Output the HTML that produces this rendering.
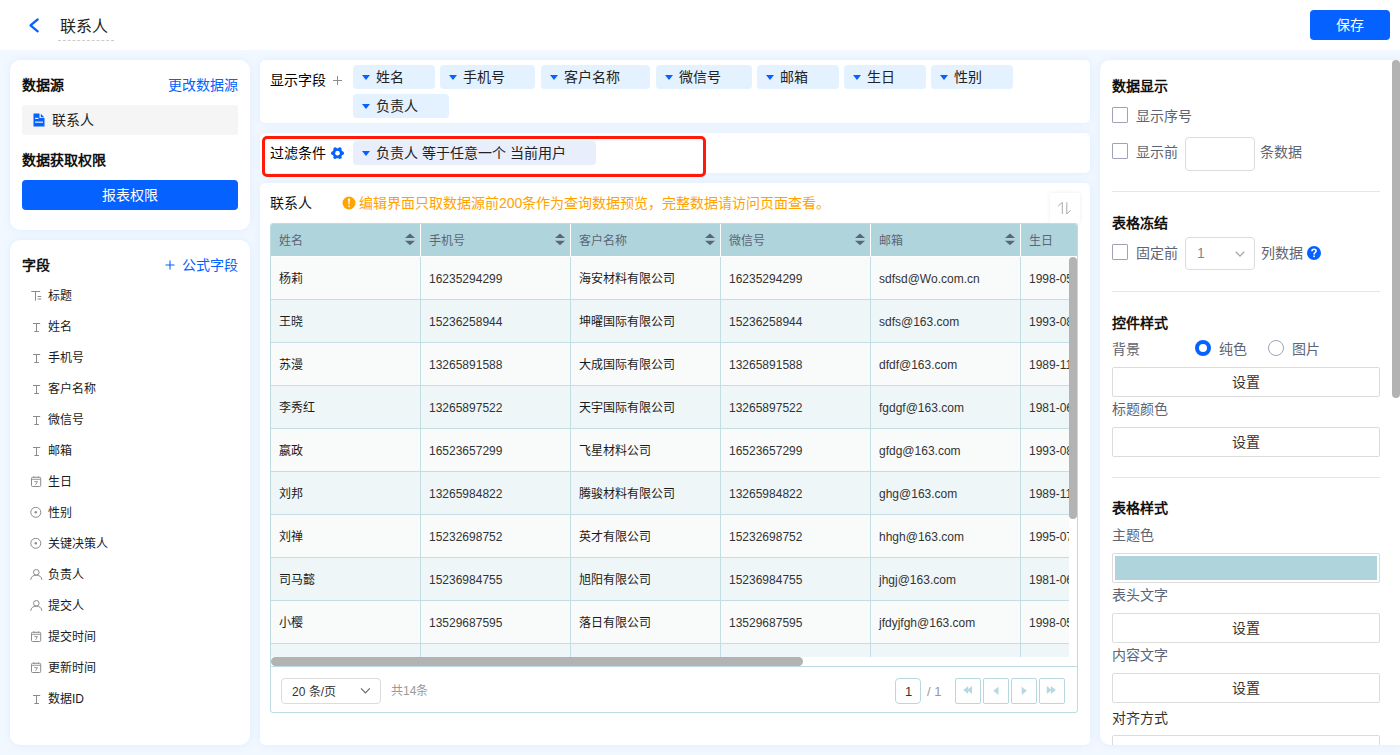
<!DOCTYPE html>
<html lang="zh-CN"><head><meta charset="utf-8">
<style>
*{box-sizing:border-box;margin:0;padding:0}
html,body{width:1400px;height:755px;overflow:hidden}
body{font-family:"Liberation Sans",sans-serif;font-size:14px;color:#222;background:#f2f8ff;position:relative}
.abs{position:absolute}
.t{position:absolute;white-space:nowrap;line-height:1}
.panel{position:absolute;background:#fff;box-shadow:0 0 10px rgba(0,120,255,.09)}
.blue{color:#0561ff}
.b{font-weight:bold;color:#111}
.btn{position:absolute;background:#0561ff;color:#fff;border-radius:4px;text-align:center}
.tag{position:absolute;height:24px;background:#e4f1fe;border-radius:4px}
.tag i{position:absolute;left:9px;top:10px;width:0;height:0;border-left:4px solid transparent;border-right:4px solid transparent;border-top:5px solid #0561ff}
.tag span{position:absolute;left:23px;top:5px;line-height:14px;color:#222}
.fi{position:absolute;left:0;width:240px;height:31px}
.fi span{position:absolute;left:38px;top:0px;font-size:12px;line-height:12px;color:#1a1a1a}
.fi svg{position:absolute;left:20px;top:0px}
.th{position:absolute;top:0;height:33px;width:150px}
.th span{position:absolute;left:8px;top:11px;font-size:12px;line-height:12px;color:#5b6577}
.th svg{position:absolute;right:5px;top:9px}
.row{position:absolute;left:0;width:1200px;height:43px;border-bottom:1px solid #c3dfe4}
.row.o{background:#f9fbfb}
.row.e{background:#eff6f8}
.cell{position:absolute;top:0;height:42px;width:150px;border-right:1px solid #c3dfe4}
.cell span{position:absolute;left:8px;top:16px;font-size:12px;line-height:12px;color:#1a1a1a;white-space:nowrap}
.cell span.l{color:#333}
.pg{position:absolute;top:12px;width:26px;height:26px;border:1px solid #b7d8de;border-radius:3px;background:#fff}
.rp .t{color:#5e6472}
.rp .t.b{color:#111}
.cb{position:absolute;width:16px;height:16px;border:1px solid #a0a3b5;border-radius:1px;background:#fff}
.sbtn{position:absolute;left:12px;width:268px;height:30px;border:1px solid #dcdcdc;border-radius:2px;background:#fff;text-align:center;line-height:28px;font-size:14px;color:#333}
.hr{position:absolute;left:12px;width:268px;height:1px;background:#e6e6e6}
</style></head><body>
<div class="abs" style="left:0;top:0;width:1400px;height:50px;background:#fff">
<svg class="abs" style="left:28px;top:17px" width="12" height="17" viewBox="0 0 12 17"><polyline points="9.7,2.4 2.5,8.35 9.7,14.3" fill="none" stroke="#0561ff" stroke-width="2.3" stroke-linecap="round" stroke-linejoin="round"/></svg>
<div class="t" style="left:60px;top:19px;font-size:16px;color:#222">联系人</div>
<div class="abs" style="left:58px;top:40px;width:56px;border-top:1px dashed #ccc"></div>
<div class="btn" style="left:1310px;top:10px;width:80px;height:30px;line-height:30px;font-size:14px">保存</div>
</div>
<div class="panel" style="left:10px;top:60px;width:240px;height:170px;border-radius:10px">
<div class="t b" style="left:12px;top:18px">数据源</div>
<div class="t blue" style="right:12px;top:18px">更改数据源</div>
<div class="abs" style="left:12px;top:45px;width:216px;height:30px;background:#f5f5f5;border-radius:2px">
<svg class="abs" style="left:11px;top:8px" width="12" height="14" viewBox="0 0 12 14"><path d="M0.5 0.5H6.5V5H11.5V13.5H0.5Z" fill="#0561ff"/><path d="M7.8 0.8L11.2 4.2H7.8Z" fill="#0561ff"/><rect x="2" y="4.8" width="3.5" height="1.1" fill="#fff"/><rect x="2" y="8.6" width="8" height="1.1" fill="#fff"/></svg>
<div class="t" style="left:30px;top:8px">联系人</div>
</div>
<div class="t b" style="left:12px;top:93px">数据获取权限</div>
<div class="btn" style="left:12px;top:120px;width:216px;height:30px;line-height:30px">报表权限</div>
</div>
<div class="panel" style="left:10px;top:240px;width:240px;height:505px;border-radius:10px">
<div class="t b" style="left:12px;top:18px">字段</div>
<div class="t blue" style="right:12px;top:18px">公式字段</div>
<svg class="abs" style="left:155px;top:20px" width="10" height="10" viewBox="0 0 10 10"><path d="M0.5 5H9.5M5 0.5V9.5" stroke="#0561ff" stroke-width="1.1" fill="none"/></svg>
<div class="fi" style="top:50px"><svg width="12" height="12" viewBox="0 0 12 12"><path d="M1.3 1.5H10.2M5.5 1.5V10.6M7.6 6.5H11.2M7.6 9H11.2" stroke="#8a8a8a" stroke-width="1" fill="none"/></svg><span>标题</span></div>
<div class="fi" style="top:81px"><svg width="12" height="12" viewBox="0 0 12 12"><path d="M3 2.5H10.2M6.5 2.5V10.5M4.3 10.5H8.9" stroke="#8a8a8a" stroke-width="1" fill="none"/></svg><span>姓名</span></div>
<div class="fi" style="top:112px"><svg width="12" height="12" viewBox="0 0 12 12"><path d="M3 2.5H10.2M6.5 2.5V10.5M4.3 10.5H8.9" stroke="#8a8a8a" stroke-width="1" fill="none"/></svg><span>手机号</span></div>
<div class="fi" style="top:143px"><svg width="12" height="12" viewBox="0 0 12 12"><path d="M3 2.5H10.2M6.5 2.5V10.5M4.3 10.5H8.9" stroke="#8a8a8a" stroke-width="1" fill="none"/></svg><span>客户名称</span></div>
<div class="fi" style="top:174px"><svg width="12" height="12" viewBox="0 0 12 12"><path d="M3 2.5H10.2M6.5 2.5V10.5M4.3 10.5H8.9" stroke="#8a8a8a" stroke-width="1" fill="none"/></svg><span>微信号</span></div>
<div class="fi" style="top:205px"><svg width="12" height="12" viewBox="0 0 12 12"><path d="M3 2.5H10.2M6.5 2.5V10.5M4.3 10.5H8.9" stroke="#8a8a8a" stroke-width="1" fill="none"/></svg><span>邮箱</span></div>
<div class="fi" style="top:236px"><svg width="12" height="12" viewBox="0 0 12 12"><rect x="1.5" y="1.3" width="9.2" height="9.2" rx="1" stroke="#8a8a8a" stroke-width="1" fill="none"/><path d="M1.5 3.3H10.7M4 0.3V1.8M8.5 0.3V1.8M4.3 5.6H7.4L5.6 8.8" stroke="#8a8a8a" stroke-width="0.9" fill="none"/></svg><span>生日</span></div>
<div class="fi" style="top:267px"><svg width="12" height="12" viewBox="0 0 12 12"><circle cx="5.8" cy="5.3" r="5" stroke="#8a8a8a" stroke-width="1" fill="none"/><circle cx="5.8" cy="5.3" r="1.2" fill="#8a8a8a"/></svg><span>性别</span></div>
<div class="fi" style="top:298px"><svg width="12" height="12" viewBox="0 0 12 12"><circle cx="5.8" cy="5.3" r="5" stroke="#8a8a8a" stroke-width="1" fill="none"/><circle cx="5.8" cy="5.3" r="1.2" fill="#8a8a8a"/></svg><span>关键决策人</span></div>
<div class="fi" style="top:329px"><svg width="13" height="12" viewBox="0 0 13 12"><circle cx="6.3" cy="3.3" r="2.8" stroke="#8a8a8a" stroke-width="1" fill="none"/><path d="M0.8 10.8C0.8 8 3.2 6.1 6.3 6.1S11.8 8 11.8 10.8" stroke="#8a8a8a" stroke-width="1" fill="none"/></svg><span>负责人</span></div>
<div class="fi" style="top:360px"><svg width="13" height="12" viewBox="0 0 13 12"><circle cx="6.3" cy="3.3" r="2.8" stroke="#8a8a8a" stroke-width="1" fill="none"/><path d="M0.8 10.8C0.8 8 3.2 6.1 6.3 6.1S11.8 8 11.8 10.8" stroke="#8a8a8a" stroke-width="1" fill="none"/></svg><span>提交人</span></div>
<div class="fi" style="top:391px"><svg width="12" height="12" viewBox="0 0 12 12"><rect x="1.5" y="1.3" width="9.2" height="9.2" rx="1" stroke="#8a8a8a" stroke-width="1" fill="none"/><path d="M1.5 3.3H10.7M4 0.3V1.8M8.5 0.3V1.8M4.3 5.6H7.4L5.6 8.8" stroke="#8a8a8a" stroke-width="0.9" fill="none"/></svg><span>提交时间</span></div>
<div class="fi" style="top:422px"><svg width="12" height="12" viewBox="0 0 12 12"><rect x="1.5" y="1.3" width="9.2" height="9.2" rx="1" stroke="#8a8a8a" stroke-width="1" fill="none"/><path d="M1.5 3.3H10.7M4 0.3V1.8M8.5 0.3V1.8M4.3 5.6H7.4L5.6 8.8" stroke="#8a8a8a" stroke-width="0.9" fill="none"/></svg><span>更新时间</span></div>
<div class="fi" style="top:453px"><svg width="12" height="12" viewBox="0 0 12 12"><path d="M3 2.5H10.2M6.5 2.5V10.5M4.3 10.5H8.9" stroke="#8a8a8a" stroke-width="1" fill="none"/></svg><span>数据ID</span></div>
</div>
<div class="panel" style="left:260px;top:60px;width:830px;height:63px;border-radius:5px">
<div class="t" style="left:10px;top:13px;color:#000">显示字段</div>
<svg class="abs" style="left:73px;top:16px" width="9" height="9" viewBox="0 0 9 9"><path d="M0 4.5H9M4.5 0V9" stroke="#8c8c8c" stroke-width="1" fill="none"/></svg>
<div class="tag" style="left:93px;top:5px;width:82px"><i></i><span>姓名</span></div>
<div class="tag" style="left:180px;top:5px;width:95px"><i></i><span>手机号</span></div>
<div class="tag" style="left:281px;top:5px;width:109px"><i></i><span>客户名称</span></div>
<div class="tag" style="left:396px;top:5px;width:96px"><i></i><span>微信号</span></div>
<div class="tag" style="left:497px;top:5px;width:82px"><i></i><span>邮箱</span></div>
<div class="tag" style="left:584px;top:5px;width:82px"><i></i><span>生日</span></div>
<div class="tag" style="left:671px;top:5px;width:82px"><i></i><span>性别</span></div>
<div class="tag" style="left:93px;top:34px;width:96px"><i></i><span>负责人</span></div>
</div>
<div class="panel" style="left:260px;top:133px;width:830px;height:40px;border-radius:5px">
<div class="t" style="left:10px;top:13px;color:#000">过滤条件</div>
<svg class="abs" style="left:71px;top:14px" width="14" height="13" viewBox="0 0 14 13"><g fill="#0561ff"><circle cx="6.50" cy="6.15" r="5"/><circle cx="11.20" cy="6.15" r="1.80"/><circle cx="8.85" cy="2.08" r="1.80"/><circle cx="4.15" cy="2.08" r="1.80"/><circle cx="1.80" cy="6.15" r="1.80"/><circle cx="4.15" cy="10.22" r="1.80"/><circle cx="8.85" cy="10.22" r="1.80"/></g><circle cx="6.50" cy="6.15" r="2.3" fill="#fff"/></svg>
<div class="tag" style="left:93px;top:8px;width:243px;background:#e8eefc"><i></i><span>负责人 等于任意一个 当前用户</span></div>
</div>
<div class="abs" style="left:262px;top:136px;width:444px;height:41px;border:3px solid #ff1a0a;border-radius:5px"></div>
<div class="panel" style="left:260px;top:183px;width:830px;height:562px;border-radius:5px">
<div class="t" style="left:10px;top:13px;color:#111">联系人</div>
<svg class="abs" style="left:82px;top:13px" width="14" height="14" viewBox="0 0 14 14"><circle cx="7" cy="7" r="6.5" fill="#ffa400"/><path d="M5.9 2.8H8.1L7.5 8.6H6.5Z" fill="#fff"/><rect x="6.3" y="9.6" width="1.4" height="1.5" fill="#fff"/></svg>
<div class="t" style="left:99px;top:13px;color:#ffa200">编辑界面只取数据源前200条作为查询数据预览，完整数据请访问页面查看。</div>
<div class="abs" style="left:790px;top:10px;width:30px;height:30px;background:#fff;box-shadow:0 0 4px rgba(0,0,0,.08)"><svg class="abs" style="left:7px;top:8px" width="16" height="14" viewBox="0 0 16 14"><path d="M5.3 13V1.3L1.2 5.2M9.8 1.3V13L13.7 9.1" stroke="#aaa" stroke-width="1" fill="none"/></svg></div>
<div class="abs" style="left:10px;top:40px;width:808px;height:490px;border:1px solid #bcdce1;border-radius:3px;overflow:hidden;background:#fff">
<div class="abs" style="left:0;top:0;width:806px;height:32px;background:#b0d4dc;overflow:hidden">
<div class="th" style="left:0px;border-right:1px solid #fff;"><span>姓名</span><svg width="10" height="13" viewBox="0 0 10 13"><path d="M5 0.5L10 5H0Z" fill="#5b6577"/><path d="M0 7.8H10L5 12.3Z" fill="#5b6577"/></svg></div>
<div class="th" style="left:150px;border-right:1px solid #fff;"><span>手机号</span><svg width="10" height="13" viewBox="0 0 10 13"><path d="M5 0.5L10 5H0Z" fill="#5b6577"/><path d="M0 7.8H10L5 12.3Z" fill="#5b6577"/></svg></div>
<div class="th" style="left:300px;border-right:1px solid #fff;"><span>客户名称</span><svg width="10" height="13" viewBox="0 0 10 13"><path d="M5 0.5L10 5H0Z" fill="#5b6577"/><path d="M0 7.8H10L5 12.3Z" fill="#5b6577"/></svg></div>
<div class="th" style="left:450px;border-right:1px solid #fff;"><span>微信号</span><svg width="10" height="13" viewBox="0 0 10 13"><path d="M5 0.5L10 5H0Z" fill="#5b6577"/><path d="M0 7.8H10L5 12.3Z" fill="#5b6577"/></svg></div>
<div class="th" style="left:600px;border-right:1px solid #fff;"><span>邮箱</span><svg width="10" height="13" viewBox="0 0 10 13"><path d="M5 0.5L10 5H0Z" fill="#5b6577"/><path d="M0 7.8H10L5 12.3Z" fill="#5b6577"/></svg></div>
<div class="th" style="left:750px;"><span>生日</span></div>
</div>
<div class="abs" style="left:0;top:33px;width:798px;height:400px;overflow:hidden">
<div class="row o" style="top:0px"><div class="cell" style="left:0px"><span>杨莉</span></div><div class="cell" style="left:150px"><span class="l">16235294299</span></div><div class="cell" style="left:300px"><span>海安材料有限公司</span></div><div class="cell" style="left:450px"><span class="l">16235294299</span></div><div class="cell" style="left:600px"><span class="l">sdfsd@Wo.com.cn</span></div><div class="cell" style="left:750px"><span class="l">1998-05-01</span></div></div>
<div class="row e" style="top:43px"><div class="cell" style="left:0px"><span>王晓</span></div><div class="cell" style="left:150px"><span class="l">15236258944</span></div><div class="cell" style="left:300px"><span>坤曜国际有限公司</span></div><div class="cell" style="left:450px"><span class="l">15236258944</span></div><div class="cell" style="left:600px"><span class="l">sdfs@163.com</span></div><div class="cell" style="left:750px"><span class="l">1993-08-01</span></div></div>
<div class="row o" style="top:86px"><div class="cell" style="left:0px"><span>苏漫</span></div><div class="cell" style="left:150px"><span class="l">13265891588</span></div><div class="cell" style="left:300px"><span>大成国际有限公司</span></div><div class="cell" style="left:450px"><span class="l">13265891588</span></div><div class="cell" style="left:600px"><span class="l">dfdf@163.com</span></div><div class="cell" style="left:750px"><span class="l">1989-11-01</span></div></div>
<div class="row e" style="top:129px"><div class="cell" style="left:0px"><span>李秀红</span></div><div class="cell" style="left:150px"><span class="l">13265897522</span></div><div class="cell" style="left:300px"><span>天宇国际有限公司</span></div><div class="cell" style="left:450px"><span class="l">13265897522</span></div><div class="cell" style="left:600px"><span class="l">fgdgf@163.com</span></div><div class="cell" style="left:750px"><span class="l">1981-06-01</span></div></div>
<div class="row o" style="top:172px"><div class="cell" style="left:0px"><span>嬴政</span></div><div class="cell" style="left:150px"><span class="l">16523657299</span></div><div class="cell" style="left:300px"><span>飞星材料公司</span></div><div class="cell" style="left:450px"><span class="l">16523657299</span></div><div class="cell" style="left:600px"><span class="l">gfdg@163.com</span></div><div class="cell" style="left:750px"><span class="l">1993-08-01</span></div></div>
<div class="row e" style="top:215px"><div class="cell" style="left:0px"><span>刘邦</span></div><div class="cell" style="left:150px"><span class="l">13265984822</span></div><div class="cell" style="left:300px"><span>腾骏材料有限公司</span></div><div class="cell" style="left:450px"><span class="l">13265984822</span></div><div class="cell" style="left:600px"><span class="l">ghg@163.com</span></div><div class="cell" style="left:750px"><span class="l">1989-11-01</span></div></div>
<div class="row o" style="top:258px"><div class="cell" style="left:0px"><span>刘禅</span></div><div class="cell" style="left:150px"><span class="l">15232698752</span></div><div class="cell" style="left:300px"><span>英才有限公司</span></div><div class="cell" style="left:450px"><span class="l">15232698752</span></div><div class="cell" style="left:600px"><span class="l">hhgh@163.com</span></div><div class="cell" style="left:750px"><span class="l">1995-07-01</span></div></div>
<div class="row e" style="top:301px"><div class="cell" style="left:0px"><span>司马懿</span></div><div class="cell" style="left:150px"><span class="l">15236984755</span></div><div class="cell" style="left:300px"><span>旭阳有限公司</span></div><div class="cell" style="left:450px"><span class="l">15236984755</span></div><div class="cell" style="left:600px"><span class="l">jhgj@163.com</span></div><div class="cell" style="left:750px"><span class="l">1981-06-01</span></div></div>
<div class="row o" style="top:344px"><div class="cell" style="left:0px"><span>小樱</span></div><div class="cell" style="left:150px"><span class="l">13529687595</span></div><div class="cell" style="left:300px"><span>落日有限公司</span></div><div class="cell" style="left:450px"><span class="l">13529687595</span></div><div class="cell" style="left:600px"><span class="l">jfdyjfgh@163.com</span></div><div class="cell" style="left:750px"><span class="l">1998-05-01</span></div></div>
<div class="row e" style="top:387px"><div class="cell" style="left:0px"><span></span></div><div class="cell" style="left:150px"><span class="l"></span></div><div class="cell" style="left:300px"><span></span></div><div class="cell" style="left:450px"><span class="l"></span></div><div class="cell" style="left:600px"><span class="l"></span></div><div class="cell" style="left:750px"><span class="l"></span></div></div>
</div>
<div class="abs" style="left:0;top:433px;width:806px;height:10px;background:#fff;border-bottom:1px solid #bcdce1"></div>
<div class="abs" style="left:0;top:433px;width:532px;height:9px;background:#b3b3b3;border-radius:4.5px"></div>
<div class="abs" style="left:798px;top:33px;width:8px;height:262px;background:#b3b3b3;border-radius:4px"></div>
<div class="abs" style="left:0;top:443px;width:806px;height:46px">
<div class="abs" style="left:10px;top:11px;width:100px;height:26px;border:1px solid #dcdcdc;border-radius:4px"><div class="t" style="left:10px;top:7px;font-size:12px;color:#333">20 条/页</div><svg class="abs" style="left:78px;top:8px" width="11" height="8" viewBox="0 0 11 8"><polyline points="1,1.3 5.4,5.8 9.8,1.3" stroke="#6a6a6a" stroke-width="1.2" fill="none"/></svg></div>
<div class="t" style="left:120px;top:18px;font-size:12px;color:#999">共14条</div>
<div class="pg" style="left:624px;top:11px;width:26px;height:26px;border-radius:4px"><div class="t" style="left:9px;top:6px;font-size:13px;color:#333">1</div></div>
<div class="t" style="left:656px;top:18px;font-size:13px;color:#999">/ 1</div>
<div class="pg" style="left:684px;top:11px;width:26px;height:26px;border-radius:2px"><svg class="abs" style="left:-1px;top:-1px" width="26" height="26" viewBox="0 0 26 26"><path d="M8.3 12L13.2 8V16Z M12.2 12L17.1 8V16Z" fill="#b7d8df"/></svg></div>
<div class="pg" style="left:712px;top:11px;width:26px;height:26px;border-radius:2px"><svg class="abs" style="left:-1px;top:-1px" width="26" height="26" viewBox="0 0 26 26"><path d="M10.3 12.8L15.5 8.7V16.9Z" fill="#b7d8df"/></svg></div>
<div class="pg" style="left:740px;top:11px;width:26px;height:26px;border-radius:2px"><svg class="abs" style="left:-1px;top:-1px" width="26" height="26" viewBox="0 0 26 26"><path d="M15.9 12.8L10.7 8.7V16.9Z" fill="#b7d8df"/></svg></div>
<div class="pg" style="left:768px;top:11px;width:26px;height:26px;border-radius:2px"><svg class="abs" style="left:-1px;top:-1px" width="26" height="26" viewBox="0 0 26 26"><path d="M12.7 12L7.8 8V16Z M16.8 12L11.9 8V16Z" fill="#b7d8df"/></svg></div>
</div>
</div>
</div>
<div class="panel rp" style="left:1100px;top:60px;width:300px;height:685px;border-radius:10px 0 0 10px;overflow:hidden">
<div class="t b" style="left:12px;top:19px">数据显示</div>
<div class="cb" style="left:12px;top:47px"></div><div class="t" style="left:36px;top:49px">显示序号</div>
<div class="cb" style="left:12px;top:83px"></div><div class="t" style="left:36px;top:85px">显示前</div>
<div class="abs" style="left:85px;top:77px;width:70px;height:34px;border:1px solid #dcdcdc;border-radius:4px"></div>
<div class="t" style="left:160px;top:85px">条数据</div>
<div class="hr" style="top:131px"></div>
<div class="t b" style="left:12px;top:156px">表格冻结</div>
<div class="cb" style="left:12px;top:184px"></div><div class="t" style="left:36px;top:186px">固定前</div>
<div class="abs" style="left:85px;top:177px;width:70px;height:33px;border:1px solid #dcdcdc;border-radius:4px"><div class="t" style="left:11px;top:8px;color:#888">1</div><svg class="abs" style="left:49px;top:13px" width="10" height="6" viewBox="0 0 10 6"><polyline points="0.8,0.8 5,5 9.2,0.8" stroke="#aaa" stroke-width="1.3" fill="none"/></svg></div>
<div class="t" style="left:161px;top:186px">列数据</div>
<svg class="abs" style="left:207px;top:186px" width="14" height="14" viewBox="0 0 14 14"><circle cx="7" cy="7" r="7" fill="#0561ff"/><path d="M4.9 5.3C4.9 4 5.8 3.2 7 3.2S9.1 4 9.1 5.1C9.1 6.3 7.6 6.6 7.2 7.5V8.4" stroke="#fff" stroke-width="1.6" fill="none"/><rect x="6.3" y="9.5" width="1.6" height="1.6" fill="#fff"/></svg>
<div class="hr" style="top:231px"></div>
<div class="t b" style="left:12px;top:256px">控件样式</div>
<div class="t" style="left:12px;top:282px">背景</div>
<div class="abs" style="left:95px;top:280px;width:16px;height:16px;border-radius:50%;border:4.5px solid #0561ff;background:#fff"></div>
<div class="t" style="left:119px;top:282px">纯色</div>
<div class="abs" style="left:168px;top:280px;width:16px;height:16px;border-radius:50%;border:1px solid #a0a3b5;background:#fff"></div>
<div class="t" style="left:192px;top:282px">图片</div>
<div class="sbtn" style="top:307px">设置</div>
<div class="t" style="left:12px;top:342px">标题颜色</div>
<div class="sbtn" style="top:367px">设置</div>
<div class="hr" style="top:417px"></div>
<div class="t b" style="left:12px;top:441px">表格样式</div>
<div class="t" style="left:12px;top:468px">主题色</div>
<div class="abs" style="left:12px;top:493px;width:268px;height:30px;border:1px solid #dcdcdc;border-radius:2px;padding:2px"><div style="width:100%;height:100%;background:#b0d4dc"></div></div>
<div class="t" style="left:12px;top:528px">表头文字</div>
<div class="sbtn" style="top:553px">设置</div>
<div class="t" style="left:12px;top:588px">内容文字</div>
<div class="sbtn" style="top:613px">设置</div>
<div class="t" style="left:12px;top:651px;color:#333">对齐方式</div>
<div class="sbtn" style="top:675px"></div>
</div>
<div class="abs" style="left:1392px;top:60px;width:8px;height:338px;background:#b3b3b3;border-radius:4px"></div>
</body></html>
